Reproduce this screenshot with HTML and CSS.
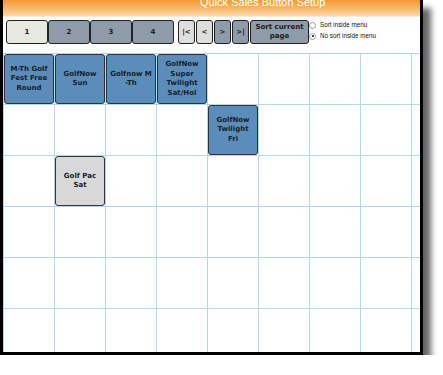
FILE: index.html
```html
<!DOCTYPE html>
<html>
<head>
<meta charset="utf-8">
<link rel="stylesheet" href="styles.css">
</head>
<body>
<div class="frame">
  <div class="header"><span class="title">Quick Sales Button Setup</span></div>
  <div class="toolbar">
    <div class="tabs">
      <div class="btn tab active">1</div>
      <div class="btn tab">2</div>
      <div class="btn tab">3</div>
      <div class="btn tab">4</div>
    </div>
    <div class="nav">
      <div class="btn navb light">|&lt;</div>
      <div class="btn navb light">&lt;</div>
      <div class="btn navb">&gt;</div>
      <div class="btn navb">&gt;|</div>
      <div class="btn sort">Sort current<br>page</div>
    </div>
    <div class="radios">
      <div class="radio"><span class="circle"></span>Sort inside menu</div>
      <div class="radio"><span class="circle checked"></span>No sort inside menu</div>
    </div>
  </div>
  <div class="grid">
    <div class="cell"><div class="qb">M-Th Golf<br>Fest Free<br>Round</div></div>
    <div class="cell"><div class="qb">GolfNow<br>Sun</div></div>
    <div class="cell"><div class="qb">Golfnow M<br>-Th</div></div>
    <div class="cell"><div class="qb">GolfNow<br>Super<br>Twilight<br>Sat/Hol</div></div>
    <div class="cell"></div><div class="cell"></div><div class="cell"></div><div class="cell"></div><div class="cell"></div>

    <div class="cell"></div><div class="cell"></div><div class="cell"></div><div class="cell"></div>
    <div class="cell"><div class="qb">GolfNow<br>Twilight<br>Fri</div></div>
    <div class="cell"></div><div class="cell"></div><div class="cell"></div><div class="cell"></div>

    <div class="cell"></div>
    <div class="cell"><div class="qb grey">Golf Pac<br>Sat</div></div>
    <div class="cell"></div><div class="cell"></div><div class="cell"></div><div class="cell"></div><div class="cell"></div><div class="cell"></div><div class="cell"></div>

    <div class="cell"></div><div class="cell"></div><div class="cell"></div><div class="cell"></div><div class="cell"></div><div class="cell"></div><div class="cell"></div><div class="cell"></div><div class="cell"></div>
    <div class="cell"></div><div class="cell"></div><div class="cell"></div><div class="cell"></div><div class="cell"></div><div class="cell"></div><div class="cell"></div><div class="cell"></div><div class="cell"></div>
    <div class="cell"></div><div class="cell"></div><div class="cell"></div><div class="cell"></div><div class="cell"></div><div class="cell"></div><div class="cell"></div><div class="cell"></div><div class="cell"></div>
  </div>
</div>
</body>
</html>
```
FILE: styles.css
```css
html, body {
  margin: 0;
  padding: 0;
  background: #fff;
}
.frame {
  width: 417px;
  height: 352px;
  border-left: 3px solid #000;
  border-right: 3px solid #000;
  border-bottom: 3px solid #000;
  box-shadow: 8px 8px 6px rgba(0, 0, 0, 0.6);
  overflow: hidden;
  background: #fff;
}
.header {
  height: 16px;
  background: linear-gradient(to bottom, #f59a30 0%, #f8b668 50%, #fcd9ad 100%);
  overflow: hidden;
  border-bottom: 1px solid #fbe9d4;
}
.title {
  display: block;
  margin-top: -4px;
  padding-left: 197px;
  font-family: "Liberation Sans", Arial, sans-serif;
  font-size: 11px;
  line-height: 12px;
  color: #fff;
}
.toolbar {
  display: flex;
  align-items: flex-start;
  margin-top: 3px;
  padding-left: 3px;
  height: 24px;
}
.tabs {
  display: flex;
}
.btn {
  box-sizing: border-box;
  height: 24px;
  border: 1px solid #222;
  border-radius: 3px;
  background: #8e9ba8;
  display: flex;
  align-items: center;
  justify-content: center;
  text-align: center;
  font-family: "DejaVu Sans", Verdana, sans-serif;
  font-weight: bold;
  font-size: 7px;
  line-height: 9px;
  color: #1a1a1a;
}
.tab {
  width: 42px;
}
.tab.active {
  background: #e6e9e2;
}
.nav {
  display: flex;
  gap: 1px;
  margin-left: 4px;
}
.navb {
  width: 17px;
}
.navb.light {
  background: #dedfdc;
}
.sort {
  width: 59px;
}
.radios {
  display: flex;
  flex-direction: column;
  gap: 3px;
  padding-top: 1px;
  font-family: "Liberation Sans", Arial, sans-serif;
  font-size: 6.3px;
  line-height: 8px;
  color: #111;
}
.radio {
  display: flex;
  align-items: center;
}
.circle {
  box-sizing: border-box;
  width: 7px;
  height: 7px;
  border: 1px solid #9a9a9a;
  border-radius: 50%;
  background: #fff;
  margin-right: 4px;
  position: relative;
}
.circle.checked::after {
  content: "";
  position: absolute;
  left: 1.5px;
  top: 1.5px;
  width: 2px;
  height: 2px;
  border-radius: 50%;
  background: #111;
}
.grid {
  margin-top: 9px;
  display: grid;
  grid-template-columns: repeat(9, 50px);
  grid-auto-rows: 50px;
  gap: 1px;
  padding: 1px 0 0 1px;
  background: #b3dbe6;
  width: 460px;
}
.cell {
  background: #fff;
}
.qb {
  box-sizing: border-box;
  width: 100%;
  height: 100%;
  border: 1px solid #2e3338;
  border-radius: 3px;
  background: #5b8dba;
  display: flex;
  align-items: center;
  justify-content: center;
  text-align: center;
  font-family: "DejaVu Sans", Verdana, sans-serif;
  font-weight: bold;
  font-size: 7px;
  line-height: 9.5px;
  color: #16202c;
}
.qb.grey {
  background: #d8d8d8;
}
```
